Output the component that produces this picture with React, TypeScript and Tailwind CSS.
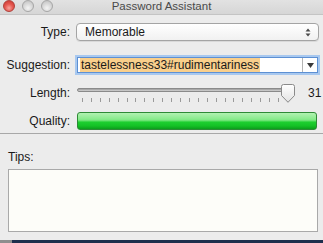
import React from "react";

const font = { fontFamily: '"Liberation Sans", Arial, sans-serif' };

function Light({ red }: { red?: boolean }) {
  return (
    <div
      className={
        red
          ? "w-[12px] h-[12px] rounded-full border border-[#b0403a] bg-[radial-gradient(circle_at_50%_70%,#f7a39c_0%,#e65a52_45%,#c8322c_100%)]"
          : "w-[12px] h-[12px] rounded-full border border-[#a6a6a6] bg-[radial-gradient(circle_at_50%_70%,#f4f4f4_0%,#d8d8d8_50%,#bdbdbd_100%)]"
      }
    />
  );
}

function Knob() {
  return (
    <svg width="14" height="19" viewBox="0 0 14 19">
      <defs>
        <linearGradient id="kg" x1="0" y1="0" x2="0" y2="1">
          <stop offset="0" stopColor="#ffffff" />
          <stop offset="1" stopColor="#e2e2e2" />
        </linearGradient>
      </defs>
      <path
        d="M2.5 0.5 H11.5 Q13.5 0.5 13.5 2.5 V11.5 L7 18.3 L0.5 11.5 V2.5 Q0.5 0.5 2.5 0.5 Z"
        fill="url(#kg)"
        stroke="#8a8a8a"
        strokeWidth="1"
      />
    </svg>
  );
}

export default function App() {
  const ticks = Array.from({ length: 24 });
  return (
    <div className="w-[323px] h-[243px] overflow-hidden flex flex-col bg-[#1e2f4d]" style={font}>
      <div className="h-[240px] bg-[#ececec] flex flex-col shrink-0">
        {/* title bar */}
        <div className="h-[15px] grid grid-cols-[1fr_auto_1fr] items-start bg-[linear-gradient(#e2e2e2,#d6d6d6)] border-b border-[#c4c4c4]">
          <div className="flex gap-[7px] pl-[3px] pt-[0px]">
            <Light red />
            <Light />
            <Light />
          </div>
          <div className="text-[11.5px] leading-[13px] text-[#4a4a4a]">Password Assistant</div>
          <div />
        </div>

        {/* Type row */}
        <div className="flex items-center mt-[8px]">
          <div className="w-[70px] text-right text-[12px] text-[#1a1a1a]">Type:</div>
          <div className="ml-[6px] w-[243px] h-[18px] rounded-[4px] border border-[#a4a4a4] bg-[linear-gradient(#ffffff,#f1f1f1)] flex items-center justify-between pl-[8px] pr-[7px] shadow-[0_1px_0_rgba(0,0,0,0.08)]">
            <span className="text-[12px] text-[#1a1a1a]">Memorable</span>
            <svg width="6" height="9" viewBox="0 0 6 9">
              <path d="M3 0.5 L5.5 3.5 H0.5 Z" fill="#4a4a4a" />
              <path d="M3 8.5 L5.5 5.5 H0.5 Z" fill="#4a4a4a" />
            </svg>
          </div>
        </div>

        {/* Suggestion row */}
        <div className="flex items-center mt-[15px]">
          <div className="w-[70px] text-right text-[12px] text-[#1a1a1a]">Suggestion:</div>
          <div className="ml-[7px] w-[241px] h-[16px] border border-[#5d90d3] bg-white flex items-stretch shadow-[0_0_0_2px_#a8c8ef]">
            <div className="flex-1 flex items-center pl-[2px]">
              <span className="bg-[#f9cf8c] text-[12px] leading-[14px] text-[#1a1a1a] px-[1px]">
                tastelessness33#rudimentariness
              </span>
            </div>
            <div className="w-[15px] border-l border-[#b4b4b4] flex items-center justify-center">
              <svg width="7" height="5" viewBox="0 0 7 5">
                <path d="M0 0 H7 L3.5 5 Z" fill="#3a3a3a" />
              </svg>
            </div>
          </div>
        </div>

        {/* Length row */}
        <div className="flex items-start mt-[10px]">
          <div className="w-[70px] text-right text-[12px] text-[#1a1a1a] mt-[0px]">Length:</div>
          <div className="ml-[7px] w-[217px] h-[20px] relative">
            <div className="mt-[4px] h-[4px] rounded-full border border-[#8a8a8a] bg-[linear-gradient(#9a9a9a,#d4d4d4)]" />
            <div className="mt-[6px] flex justify-between pl-[5px] pr-[6px]">
              {ticks.map((_, i) => (
                <div key={i} className="w-[1px] h-[4px] bg-[#9a9a9a]" />
              ))}
            </div>
            <div className="absolute right-[-1px] top-[0px]">
              <Knob />
            </div>
          </div>
          <div className="ml-[14px] text-[12px] text-[#1a1a1a] mt-[0px]">31</div>
        </div>

        {/* Quality row */}
        <div className="flex items-center mt-[8px]">
          <div className="w-[70px] text-right text-[12px] text-[#1a1a1a]">Quality:</div>
          <div className="ml-[7px] w-[240px] h-[18px] rounded-[3px] border border-[#2e8a36] bg-[linear-gradient(#b2f2b2_0%,#86ea8a_40%,#5fe068_50%,#1ecf30_56%,#14c226_80%,#0c9e1c_100%)]" />
        </div>

        {/* separator */}
        <div className="mt-[3px] h-[1px] bg-[#a8a8a8]" />

        {/* Tips */}
        <div className="mt-[16px] pl-[8px] text-[12px] leading-[14px] text-[#1a1a1a]">Tips:</div>
        <div className="mt-[5px] ml-[8px] w-[310px] h-[63px] border border-[#a9a9a9] bg-[#fdfdf9]" />
      </div>
      <div className="flex-1 flex">
        <div className="w-[12px] bg-[#8e8e8e]" />
        <div className="flex-1 bg-[#1e2f4d]" />
      </div>
    </div>
  );
}
